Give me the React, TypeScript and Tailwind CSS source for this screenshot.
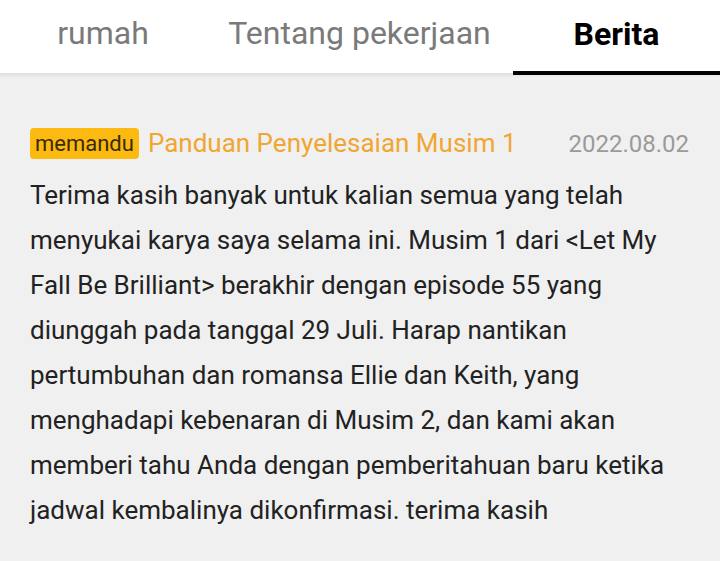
import React from 'react';

const lines = [
  'Terima kasih banyak untuk kalian semua yang telah',
  'menyukai karya saya selama ini. Musim 1 dari <Let My',
  'Fall Be Brilliant> berakhir dengan episode 55 yang',
  'diunggah pada tanggal 29 Juli. Harap nantikan',
  'pertumbuhan dan romansa Ellie dan Keith, yang',
  'menghadapi kebenaran di Musim 2, dan kami akan',
  'memberi tahu Anda dengan pemberitahuan baru ketika',
  'jadwal kembalinya dikonfirmasi. terima kasih',
];

const App: React.FC = () => {
  return (
    <div className="w-[720px] h-[561px] bg-[#f0f0f0] overflow-hidden font-['Roboto',sans-serif]">
      {/* tabs */}
      <div className="flex h-[75px] bg-white border-b-2 border-[#e2e2e2]">
        <div className="w-[206px] flex items-center justify-center pb-[8px] text-[32px] text-[#7a7a7a]">rumah</div>
        <div className="w-[307px] flex items-center justify-center pb-[8px] text-[32px] text-[#7a7a7a]">Tentang pekerjaan</div>
        <div className="flex-1 flex items-center justify-center pb-[4px] text-[32px] font-bold text-black border-b-4 border-black -mb-[2px]">
          Berita
        </div>
      </div>

      {/* berita */}
      <div className="px-[30px] pt-[49px] shadow-[inset_0_3px_3px_-2px_rgba(0,0,0,0.06)]">
        <div className="flex items-center">
          <span className="bg-[#fcb90f] text-[#3b2a05] text-[22px] leading-[31px] h-[31px] px-[5px] rounded-[4px]">memandu</span>
          <span className="ml-[9px] text-[26px] text-[#f0a632]">Panduan Penyelesaian Musim 1</span>
          <span className="ml-auto text-[24px] text-[#9a9a9a] mr-[1px]">2022.08.02</span>
        </div>
        <p className="mt-[10px] text-[26px] leading-[45px] text-[#222]">
          {lines.map((l, i) => (
            <React.Fragment key={i}>
              {l}
              <br />
            </React.Fragment>
          ))}
        </p>
      </div>
    </div>
  );
};

export default App;
